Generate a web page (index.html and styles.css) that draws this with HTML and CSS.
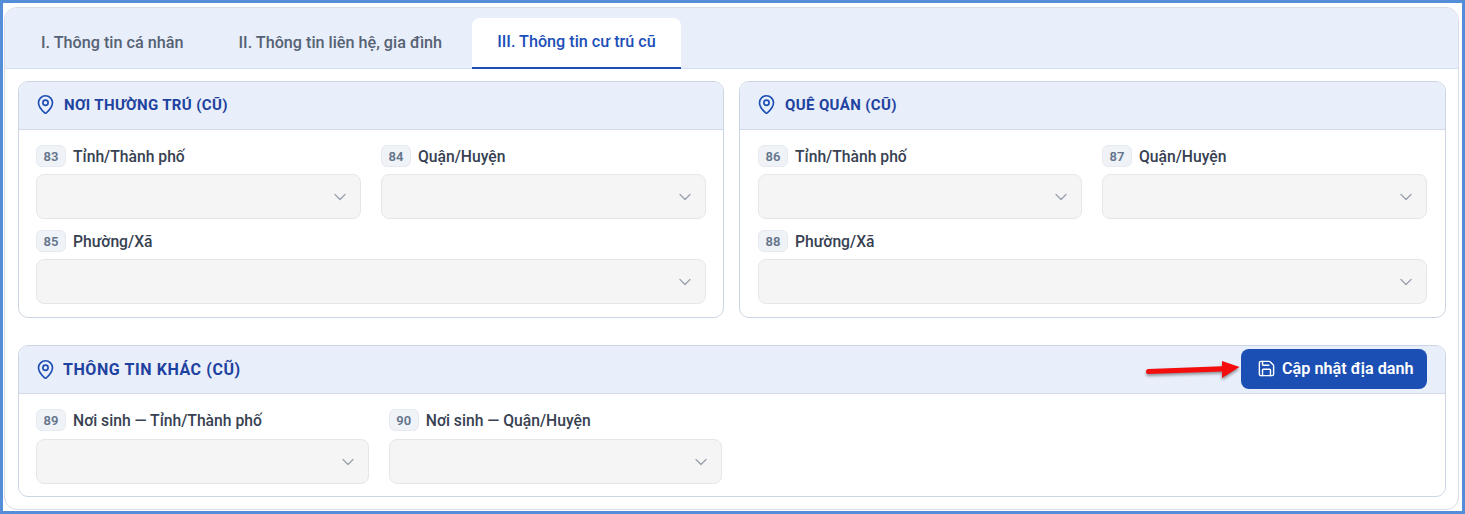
FILE: index.html
```html
<!DOCTYPE html>
<html lang="vi">
<head>
<meta charset="utf-8">
<title>Thông tin cư trú cũ</title>
<link rel="stylesheet" href="styles.css">
</head>
<body>
<svg class="defs" width="0" height="0" aria-hidden="true">
  <symbol id="pin" viewBox="0 0 24 24"><path d="M20 10c0 5-5.5 10.2-7.4 11.8a1 1 0 0 1-1.2 0C9.5 20.2 4 15 4 10a8 8 0 0 1 16 0"/><circle cx="12" cy="10" r="3"/></symbol>
  <symbol id="chev" viewBox="0 0 24 24"><path d="m6 9 6 6 6-6"/></symbol>
</svg>
<div class="frame">
  <div class="card">
    <nav class="tabs">
      <a class="tab">I. Thông tin cá nhân</a>
      <a class="tab">II. Thông tin liên hệ, gia đình</a>
      <a class="tab active">III. Thông tin cư trú cũ</a>
    </nav>
    <div class="content">
      <div class="two">
        <section class="panel">
          <header class="head"><svg class="pin"><use href="#pin"/></svg><h3 class="title">NƠI THƯỜNG TRÚ (CŨ)</h3></header>
          <div class="fields">
            <div class="field"><label class="lab"><span class="num">83</span>Tỉnh/Thành phố</label><div class="sel"><svg class="chev"><use href="#chev"/></svg></div></div>
            <div class="field"><label class="lab"><span class="num">84</span>Quận/Huyện</label><div class="sel"><svg class="chev"><use href="#chev"/></svg></div></div>
            <div class="field wide"><label class="lab"><span class="num">85</span>Phường/Xã</label><div class="sel"><svg class="chev"><use href="#chev"/></svg></div></div>
          </div>
        </section>
        <section class="panel">
          <header class="head"><svg class="pin"><use href="#pin"/></svg><h3 class="title">QUÊ QUÁN (CŨ)</h3></header>
          <div class="fields right">
            <div class="field"><label class="lab"><span class="num">86</span>Tỉnh/Thành phố</label><div class="sel"><svg class="chev"><use href="#chev"/></svg></div></div>
            <div class="field"><label class="lab"><span class="num">87</span>Quận/Huyện</label><div class="sel"><svg class="chev"><use href="#chev"/></svg></div></div>
            <div class="field wide"><label class="lab"><span class="num">88</span>Phường/Xã</label><div class="sel"><svg class="chev"><use href="#chev"/></svg></div></div>
          </div>
        </section>
      </div>
      <section class="panel other">
        <header class="head split">
          <div class="head-left"><svg class="pin"><use href="#pin"/></svg><h3 class="title big">THÔNG TIN KHÁC (CŨ)</h3></div>
          <button class="btn">
            <svg class="save" viewBox="0 0 24 24"><path d="M15.2 3a2 2 0 0 1 1.4.6l3.8 3.8a2 2 0 0 1 .6 1.4V19a2 2 0 0 1-2 2H5a2 2 0 0 1-2-2V5a2 2 0 0 1 2-2z"/><path d="M17 21v-7a1 1 0 0 0-1-1H8a1 1 0 0 0-1 1v7"/><path d="M7 3v4a1 1 0 0 0 1 1h7"/></svg>
            Cập nhật địa danh
          </button>
          <svg class="arrow" viewBox="0 0 100 28" width="100" height="28" aria-hidden="true">
            <path d="M6.5 14 L80 11.2 L80 6 L97.5 12 L80 23 L80 16.6 L6.5 19 A2.5 2.5 0 0 1 6.5 14 Z"/>
          </svg>
        </header>
        <div class="fields four">
          <div class="field"><label class="lab"><span class="num">89</span>Nơi sinh — Tỉnh/Thành phố</label><div class="sel"><svg class="chev"><use href="#chev"/></svg></div></div>
          <div class="field"><label class="lab"><span class="num">90</span>Nơi sinh — Quận/Huyện</label><div class="sel"><svg class="chev"><use href="#chev"/></svg></div></div>
        </div>
      </section>
    </div>
  </div>
</div>
</body>
</html>
```
FILE: styles.css
```css
* { box-sizing: border-box; }
html, body { margin: 0; padding: 0; background: #fff; }
body { font-family: Roboto, "Noto Sans", sans-serif; width: 1465px; height: 514px; overflow: hidden; }
.defs { position: absolute; }
.frame { width: 1465px; height: 514px; border: 3px solid #558ed8; padding: 4px 3px 1px 1px; background: #fff; }
.card { height: 100%; border: 1px solid #d6dce8; border-radius: 13px; overflow: hidden; background: #fff; }
.tabs { display: flex; gap: 5px; height: 61px; padding: 10px 0 0 11px; background: #e8eefa; border-bottom: 1px solid #d3e0f5; }
.tab { display: flex; align-items: center; height: 51px; padding: 0 25px 3px; font-size: 16.2px; font-weight: 500; color: #566273; }
.tab.active { background: #fff; color: #1d4fb8; border-radius: 8px 8px 0 0; border-bottom: 2px solid #1d4fb8; padding: 0 25.5px 3px 25px; }
.content { padding: 12px 12px 0 13px; }
.two { display: grid; grid-template-columns: 706px 707px; gap: 15px; }
.panel { border: 1px solid #ccd5e3; border-radius: 10px; overflow: hidden; background: #fff; padding-bottom: 13px; }
.other { margin-top: 27px; position: relative; overflow: visible; padding-bottom: 12px; }
.head { display: flex; align-items: center; gap: 8px; height: 48px; padding: 0 16px 2px; background: #e8eefa; border-bottom: 1px solid #d3dced; border-radius: 10px 10px 0 0; }
.head.split { justify-content: space-between; padding: 0 18px 0 16px; position: relative; }
.head-left { display: flex; align-items: center; gap: 7px; }
.pin { width: 21px; height: 21px; fill: none; stroke: #1e4fb4; stroke-width: 1.9; stroke-linecap: round; stroke-linejoin: round; flex: none; }
.title { margin: 0; font-size: 15px; font-weight: 700; letter-spacing: .37px; color: #1e429f; }
.title.big { font-size: 16px; letter-spacing: .58px; }
.fields { display: grid; grid-template-columns: 1fr 1fr; gap: 11px 20px; padding: 15px 17px 0 17px; }
.fields.right { grid-template-columns: 324px 325px; padding: 15px 18px 0 18px; }
.fields.four { grid-template-columns: repeat(4, 1fr); padding: 16px 18px 0 17px; }
.fields.four .lab { margin: -1px 0 8px; }
.wide { grid-column: 1 / -1; }
.lab { display: flex; align-items: center; gap: 7px; height: 22px; margin-bottom: 7px; font-size: 15.7px; font-weight: 500; color: #374151; white-space: nowrap; }
.num { display: flex; align-items: center; justify-content: center; width: 30px; height: 22px; border: 1px solid #e6e9ef; border-radius: 6px; background: #eff2f7; font-size: 13px; font-weight: 600; color: #64748b; }
.sel { display: flex; align-items: center; justify-content: flex-end; height: 45px; padding-right: 10px; background: #f5f5f6; border: 1px solid #e4e6ea; border-radius: 8px; }
.chev { width: 20px; height: 20px; fill: none; stroke: #9ca3af; stroke-width: 1.6; stroke-linecap: round; stroke-linejoin: round; }
.btn { display: flex; align-items: center; gap: 6px; width: 186px; height: 40px; margin-bottom: 2px; padding: 0 0 0 16px; border: 0; border-radius: 8px; background: #1c4fb4; color: #fff; font-family: inherit; font-size: 16.2px; font-weight: 600; white-space: nowrap; }
.save { width: 19px; height: 19px; fill: none; stroke: #fff; stroke-width: 1.8; stroke-linecap: round; stroke-linejoin: round; flex: none; }
.arrow { position: absolute; left: 1123px; top: 9px; fill: #f40d0d; filter: drop-shadow(0 2px 1.5px rgba(0,0,0,.4)); }
```
